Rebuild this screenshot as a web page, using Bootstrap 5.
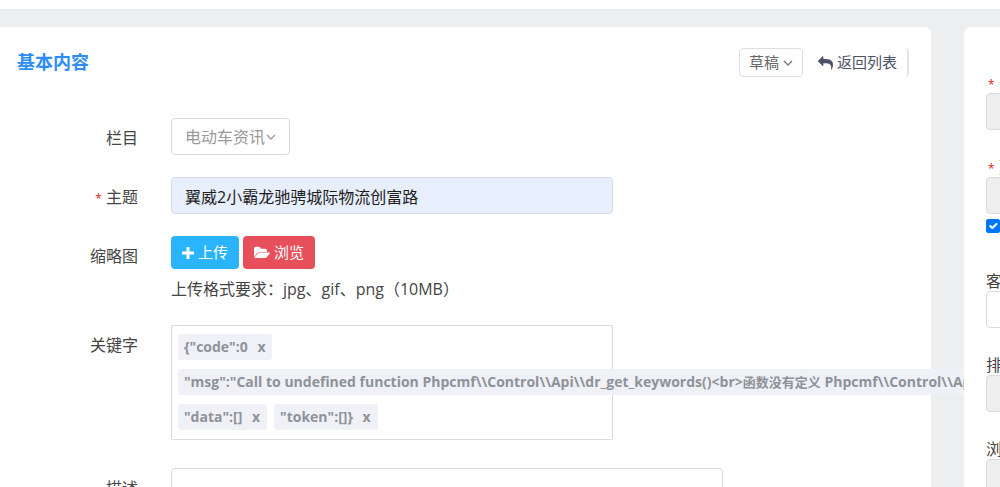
<!DOCTYPE html>
<html lang="zh-CN">
<head>
<meta charset="utf-8">
<meta name="viewport" content="width=device-width, initial-scale=1">
<title>基本内容</title>
<link href="https://cdn.jsdelivr.net/npm/bootstrap@5.3.0/dist/css/bootstrap.min.css" rel="stylesheet">
<style>
body{font-family:"Open Sans","Noto Sans CJK SC",sans-serif;font-size:16px;line-height:24px;color:#444;background:#eceef0;overflow:hidden}
.topbar{height:10px;background:#fff;border-bottom:1px solid #e6e8ea}
.layout{gap:33px;margin-top:17px;height:calc(100vh - 27px)}
.main-panel,.side-panel{background:#fff;border:0;border-radius:6px 6px 0 0}
.main-panel{border-top-left-radius:0;min-width:0;padding:21px 22px 0 0}
/* the side column continues past the right edge of the window */
.side-panel{flex:0 0 320px;margin-right:-284px;padding:46px 22px 0}
.panel-head{margin-bottom:41px}
.panel-title{font-size:18px;line-height:29px;font-weight:700;color:#2d8cf8;padding-left:17px}
.btn{border-radius:4px;font-size:15px}
.btn-status{height:29px;line-height:21px;padding:3px 9px;color:#666;border:1px solid #dcdee5}
.btn-return{height:29px;line-height:21px;padding:3px 10px 3px 15px;color:#4b5064;border:0;border-right:2px solid #e2e4ec}
.form-row{margin-bottom:22px}
.row-label{flex:0 0 155px;padding:8px 17px 0 0;text-align:right}
.row-body{padding-left:16px}
.req{color:#e02222;font-size:12px;line-height:12px}
.form-control,.form-select{height:37px;padding:5px 13px;font-size:16px;line-height:24px;border:1px solid #d8dade;border-radius:4px}
.subject-input{max-width:442px;background:#e8effc;color:#1c1c1c}
.cat-select{width:119px;color:#999;background-position:right 13px center;background-size:10px 10px;padding-right:20px;
background-image:url("data:image/svg+xml,%3Csvg xmlns='http://www.w3.org/2000/svg' viewBox='0 0 10 10'%3E%3Cpath d='M1 3l4 4 4-4' fill='none' stroke='%23999' stroke-width='1.3'/%3E%3C/svg%3E")}
.btn-upload,.btn-browse{height:33px;line-height:23px;padding:4px 10px;color:#fff;border:1px solid transparent}
.btn-upload{background:#29b4fd}
.btn-browse{background:#e7505a}
.hint{margin:8px 0 2px}
.tag-box{max-width:442px;height:115px;margin-bottom:6px;padding:8px 6px;gap:9px 7px;align-content:flex-start;border:1px solid #d8dade;border-radius:2px}
.tag-item{height:26px;line-height:26px;padding:0 7px 0 6px;border-radius:3px;background:#eff1f6;color:#8e9299;font-size:14px;font-weight:700;white-space:nowrap}
.tag-item .tag-cjk{font-size:13px}
.tag-item a{color:inherit;text-decoration:none;margin-left:6px}
.desc-area{max-width:552px;height:110px}
.side-label{display:block;line-height:20px;white-space:nowrap}
.side-label .req{margin-left:2px}
.side-group{margin-bottom:27px}
.side-group .form-control:disabled{background:#eee}
.keep-row{margin-bottom:33px}
.side-group .form-check-input{width:14px;height:14px;margin:0;border-radius:2px}
.side-group .form-check-input:checked{background-color:#0075ff;border-color:#0075ff;background-size:14px 14px}
</style>
</head>
<body>
<div class="topbar"></div>
<div class="layout d-flex">
  <main class="main-panel flex-grow-1">
    <div class="panel-head d-flex justify-content-between align-items-center">
      <h1 class="panel-title mb-0">基本内容</h1>
      <div class="d-flex">
        <button type="button" class="btn btn-status d-flex align-items-center gap-1">草稿
          <svg width="10" height="10" viewBox="0 0 10 10"><path d="M1 3l4 4 4-4" fill="none" stroke="#777" stroke-width="1.3"/></svg>
        </button>
        <a href="#" class="btn btn-return d-flex align-items-center gap-1">
          <svg width="15" height="14" viewBox="0 0 1792 1600"><path fill="currentColor" d="M1792 1056q0 166-127 451-3 7-10.500 24t-13.500 30-13 22q-12 17-28 17-15 0-23.500-10t-8.500-25q0-9 2.500-26.500t2.500-23.500q5-68 5-123 0-101-17.500-181t-48.500-138.500-80-101-105.500-69.500-133-42.500-154-21.500-175.500-6h-224v256q0 26-19 45t-45 19-45-19l-512-512q-19-19-19-45t19-45l512-512q19-19 45-19t45 19 19 45v256h224q713 0 875 403 53 134 53 333z"/></svg>
          返回列表</a>
      </div>
    </div>
    <form>
      <div class="form-row d-flex">
        <label class="row-label" for="cat">栏目</label>
        <div class="row-body flex-grow-1"><select id="cat" class="form-select cat-select"><option>电动车资讯</option></select></div>
      </div>
      <div class="form-row d-flex">
        <label class="row-label" for="subject"><span class="req">*</span> 主题</label>
        <div class="row-body flex-grow-1"><input id="subject" type="text" class="form-control subject-input" value="翼威2小霸龙驰骋城际物流创富路"></div>
      </div>
      <div class="form-row d-flex">
        <div class="row-label">缩略图</div>
        <div class="row-body flex-grow-1">
          <div class="d-flex gap-1">
            <button type="button" class="btn btn-upload d-flex align-items-center gap-1">
              <svg width="12" height="12" viewBox="0 0 12 12"><path fill="currentColor" d="M4.500 0h3v4.500h4.500v3h-4.500v4.500h-3v-4.500h-4.500v-3h4.500z"/></svg>上传</button>
            <button type="button" class="btn btn-browse d-flex align-items-center gap-1">
              <svg width="16" height="13" viewBox="0 0 1879 1500"><path fill="currentColor" d="M1879 816q0 31-31 66l-336 396q-43 51-120.500 86.500t-143.500 35.500h-1088q-34 0-60.500-13t-26.500-43q0-31 31-66l336-396q43-51 120.500-86.500t143.500-35.500h1088q34 0 60.500 13t26.500 43zM1536 544v160h-832q-94 0-197 47.500t-164 119.500l-337 396-5 6q0-4-.5-12.500t-.5-12.500v-960q0-92 66-158t158-66h320q92 0 158 66t66 158v32h544q92 0 158 66t66 158z"/></svg>浏览</button>
          </div>
          <div class="hint">上传格式要求：jpg、gif、png（10MB）</div>
        </div>
      </div>
      <div class="form-row d-flex">
        <div class="row-label">关键字</div>
        <div class="row-body flex-grow-1">
          <div class="tag-box d-flex flex-wrap">
            <span class="tag-item">{"code":0 <a href="#">x</a></span>
            <span class="tag-item">"msg":"Call to undefined function Phpcmf\\Control\\Api\\dr_get_keywords()&lt;br&gt;<span class="tag-cjk">函数没有定义</span> Phpcmf\\Control\\Api</span>
            <span class="tag-item">"data":[] <a href="#">x</a></span>
            <span class="tag-item">"token":[]} <a href="#">x</a></span>
          </div>
        </div>
      </div>
      <div class="form-row d-flex">
        <label class="row-label" for="desc">描述</label>
        <div class="row-body flex-grow-1"><textarea id="desc" class="form-control desc-area"></textarea></div>
      </div>
    </form>
  </main>
  <aside class="side-panel">
    <div class="side-group"><label class="side-label" for="author"><span class="req">*</span> 录入作者</label><input id="author" class="form-control" disabled></div>
    <div class="side-group keep-row"><label class="side-label" for="time"><span class="req">*</span> 更新时间</label><input id="time" class="form-control" disabled>
      <div class="d-flex align-items-center gap-1"><input id="keep" type="checkbox" class="form-check-input" checked><label for="keep">不更新</label></div></div>
    <div class="side-group"><label class="side-label" for="ip">客户端IP</label><input id="ip" class="form-control"></div>
    <div class="side-group"><label class="side-label" for="sort">排序值</label><input id="sort" class="form-control" disabled></div>
    <div class="side-group"><label class="side-label" for="hits">浏览数</label><input id="hits" class="form-control" disabled></div>
  </aside>
</div>
<script src="https://cdn.jsdelivr.net/npm/bootstrap@5.3.0/dist/js/bootstrap.bundle.min.js"></script>
</body>
</html>
